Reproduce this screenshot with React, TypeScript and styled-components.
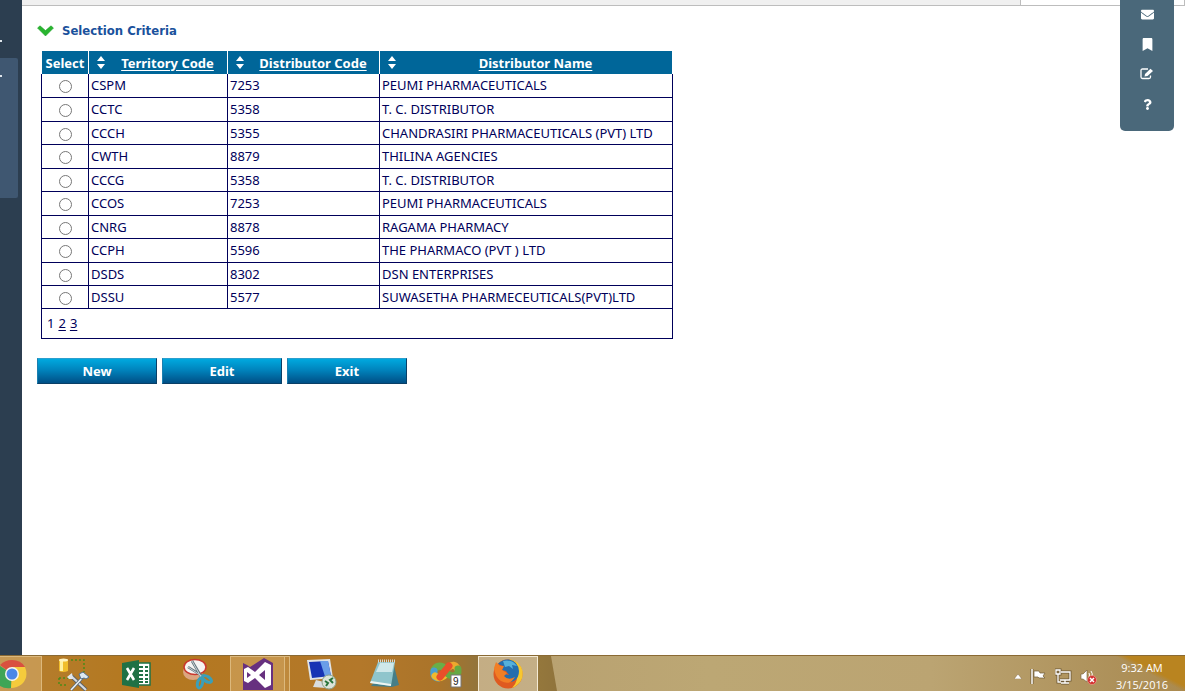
import React, { useState } from "react";
import styled, { createGlobalStyle, css } from "styled-components";
import { FaEnvelope, FaBookmark, FaQuestion } from "react-icons/fa";

const GlobalStyle = createGlobalStyle`
  *, *::before, *::after { box-sizing: border-box; }
  body {
    margin: 0;
    background: #fff;
    color: #00005a;
    font-family: "Trebuchet MS", "Noto Sans", sans-serif;
    font-size: 13px;
  }
`;

const Page = styled.div`
  position: relative;
  display: flex;
  flex-direction: column;
  min-height: 100vh;
`;

const Workspace = styled.div`
  display: flex;
  flex: 1;
`;

const Sidebar = styled.nav`
  display: flex;
  flex-direction: column;
  flex: none;
  width: 22px;
  padding-top: 40px;
  background: #2c3e50;
`;

const SideMark = styled.div`
  width: 2px;
  height: 2px;
  background: #dfe6ec;
`;

const SideGroup = styled.div`
  width: 18px;
  height: 140px;
  margin-top: 16px;
  padding-top: 17px;
  border-radius: 0 2px 2px 0;
  background: #3f5771;
`;

const Content = styled.main`
  flex: 1;
  min-width: 0;
`;

const TopStrip = styled.div`
  display: flex;
  height: 6px;
  border-bottom: 1px solid #bdbdbd;
  background: #f0f0f0;
`;

const StripEnd = styled.div`
  width: 165px;
  margin-left: auto;
  border: solid #bdbdbd;
  border-width: 0 1px;
  background: #fff;
`;

const Form = styled.form`
  padding: 16px 16px 0 15px;
`;

const Heading = styled.h1`
  display: flex;
  align-items: center;
  gap: 8px;
  height: 18px;
  margin: 0 0 11px;
  color: #1a519c;
  font: bold 13px/18px Tahoma, "DejaVu Sans Condensed", "DejaVu Sans", sans-serif;
`;

const Grid = styled.table`
  width: 632px;
  max-width: 100%;
  margin-left: 4px;
  border-collapse: collapse;
  table-layout: fixed;
`;

const Col = styled.col<{ $size: number }>`
  width: ${(p) => p.$size}px;
`;

const Row = styled.tr`
  height: 23px;
  &:nth-child(even):not(:last-child) {
    height: 24px;
  }
`;

const HeadCell = styled.th`
  height: 23px;
  padding: 0;
  border: solid #fff;
  border-width: 0 1px;
  background: #006699;
  color: #fff;
  font-size: 13px;
  line-height: 20px;
  white-space: nowrap;
`;

const HeadInner = styled.div`
  display: flex;
  align-items: center;
  padding: 0 12px 0 6px;
`;

const SortMark = styled.span`
  display: flex;
  flex: none;
  width: 12px;
  justify-content: center;
`;

const HeadLink = styled.a`
  flex: 1;
  padding-left: 13px;
  color: inherit;
  text-align: center;
  text-underline-offset: 2px;
`;

const Cell = styled.td<{ $center?: boolean }>`
  padding: 0 2px;
  border: 1px solid #00005a;
  line-height: 20px;
  white-space: nowrap;
  ${(p) => p.$center && css`text-align: center;`}
`;

const BodyRows = styled.tbody`
  tr:first-child td {
    border-top: 0;
  }
`;

const Radio = styled.input`
  appearance: none;
  display: block;
  width: 13px;
  height: 13px;
  margin: 3px auto 0;
  border: 1px solid #777;
  border-radius: 50%;
  background: #fff;
  &:checked {
    background: radial-gradient(#333 0 3px, #fff 4px);
  }
`;

const PagerCell = styled.td`
  height: 30px;
  padding: 0 5px;
  border: 1px solid #00005a;
`;

const Pager = styled.div`
  display: flex;
  gap: 4px;
`;

const PageLink = styled.a`
  color: inherit;
  text-underline-offset: 2px;
`;

const Actions = styled.div`
  display: flex;
  gap: 5px;
  margin-top: 19px;
`;

const ActionButton = styled.button`
  width: 120px;
  height: 26px;
  padding: 0;
  border: 1px solid #0a3f66;
  border-top-color: #2b9fce;
  border-left-color: #1a7fb0;
  background: linear-gradient(#00a9df, #0084bd 45%, #004f86);
  color: #fff;
  font: bold 13px/20px "Trebuchet MS", "Noto Sans", sans-serif;
`;

const ToolPanel = styled.aside`
  position: absolute;
  top: 0;
  right: 11px;
  display: flex;
  flex-direction: column;
  align-items: center;
  justify-content: flex-end;
  width: 54px;
  height: 131px;
  padding-bottom: 12px;
  border-radius: 0 0 5px 5px;
  background: #4a687a;
`;

const ToolButton = styled.button`
  display: flex;
  align-items: center;
  justify-content: center;
  flex: none;
  width: 30px;
  height: 30px;
  padding: 0;
  border: 0;
  background: none;
  color: #fff;
  font-size: 13px;
  &:last-child svg {
    font-size: 11px;
  }
`;

const Taskbar = styled.footer`
  display: flex;
  flex: none;
  gap: 2px;
  height: 36px;
  border-top: 1px solid #8a6a34;
  background: linear-gradient(90deg, #b47e30 0, #b4781f 140px, #b3782a 360px, #aa742a 440px, #94743a 475px, #94773c 540px, #8f733c 560px);
`;

const Task = styled.button<{ $open?: boolean; $active?: boolean }>`
  display: flex;
  align-items: center;
  justify-content: center;
  flex: none;
  width: 60px;
  padding: 0;
  border: 0;
  background: none;
  ${(p) => p.$open && css`
    border: solid #dcb87c;
    border-width: 1px 1px 0;
    background: rgba(255, 235, 190, 0.25);
  `}
  ${(p) => p.$active && css`
    border: solid #f4ead4;
    border-width: 1px 1px 0;
    background: rgba(255, 245, 225, 0.45);
  `}
`;

const FirstTask = styled(Task)`
  width: 42px;
  justify-content: flex-start;
  border-left: 0;
`;

const TaskStack = styled.div`
  display: flex;
`;

const StudioTask = styled(Task)`
  width: 55px;
`;

const StackEdge = styled.span`
  width: 5px;
  border: solid #dcb87c;
  border-width: 1px 1px 0 0;
  background: rgba(255, 235, 190, 0.15);
`;

const Tray = styled.div`
  display: flex;
  flex: 1;
  align-items: center;
  justify-content: flex-end;
  gap: 8px;
  margin-left: 11px;
  padding: 5px 15px 0 0;
  background:
    linear-gradient(to top right, transparent 50%, #b98420 58%) top right / 70px 36px no-repeat,
    linear-gradient(90deg, #b9a271, #bca774 25%, #bba472 60%, #ad9059 90%, #ab8a4e);
  clip-path: polygon(0 0, 100% 0, 100% 100%, 6px 100%);
  color: #fff;
`;

const Clock = styled.time`
  width: 56px;
  margin-left: 9px;
  font: 11px/17px "Segoe UI", "Open Sans", sans-serif;
  text-align: center;
  white-space: nowrap;
`;

const ChevronIcon = () => (
  <svg width="17" height="12" viewBox="0 0 17 12">
    <path d="M0.500 3 3 .8 8.500 5.500 14 .8 16.500 3 8.500 11Z" fill="#29b52f" stroke="#159a22" strokeWidth=".5" />
  </svg>
);

const SortIcon = () => (
  <svg width="8" height="13" viewBox="0 0 8 13">
    <path d="M4 0 8 5H0ZM4 13 0 8H8Z" fill="#fff" />
  </svg>
);

const EditIcon = () => (
  <svg width="14" height="12" viewBox="0 0 14 12" fill="none" stroke="#fff">
    <path d="M8 1H2.500Q1 1 1 2.500V9Q1 10.500 2.500 10.500H9Q10.500 10.500 10.500 9V7.500" strokeWidth="1.300" />
    <path d="M4.500 8.500 5 6 10.500.7 13 3 7.500 8Z" fill="#fff" stroke="none" />
  </svg>
);

const ChromeIcon = () => (
  <svg width="27" height="30" viewBox="0 0 27 30">
    <path d="M12 15 0 6Q5 1 12 1 21 1 25 8Z" fill="#d9503f" />
    <path d="M12 15 0 7V27Q5 30 11 29Z" fill="#3fa556" />
    <path d="M12 15 12 8H25Q29 18 22 25 17 29 11 29Z" fill="#f5cb3c" />
    <circle cx="12" cy="15" r="7" fill="#f7f5ee" />
    <circle cx="12" cy="15" r="5.500" fill="#4b87e8" />
  </svg>
);

const ToolsIcon = () => (
  <svg width="34" height="34" viewBox="0 0 34 34">
    <path d="M14 3H27V15M2 21V28H10M2 21H12" fill="none" stroke="#4c8a18" strokeWidth="1.500" strokeDasharray="2 2" />
    <path d="M2 3V14Q6 16 11 14V3Z" fill="#f0bd2c" />
    <path d="M3 4V14H6V4Z" fill="#fff0a0" />
    <ellipse cx="6.500" cy="3" rx="4.500" ry="1.500" fill="#fff3c0" />
    <path d="M13 18 29 33" stroke="#5a6168" strokeWidth="4" />
    <path d="M13 18 29 33" stroke="#d5dade" strokeWidth="2.200" />
    <path d="M27 19 14 33" stroke="#5b6c7d" strokeWidth="3" />
    <path d="M27 19 14 33" stroke="#eef3f6" strokeWidth="1.500" />
    <path d="M22 17 26 15 32 20 29 22 27 21 24 22Z" fill="#dde8f0" stroke="#56708a" />
    <path d="M10 20 15 16 16 22 12 22Z" fill="#e2e6e8" />
  </svg>
);

const ExcelIcon = () => (
  <svg width="30" height="30" viewBox="0 0 30 30">
    <path d="M15 4H29V26H15Z" fill="#fff" stroke="#1f7145" strokeWidth="1.500" />
    <path d="M18 8H22M24 8H27M18 12H22M24 12H27M18 16H22M24 16H27M18 20H22M24 20H27M18 23H22M24 23H27" stroke="#1f7145" strokeWidth="2" />
    <path d="M1 4 18 1V29L1 26Z" fill="#1f7145" />
    <path d="M6 9 13 21M13 9 6 21" stroke="#fff" strokeWidth="2.600" />
  </svg>
);

const SnipIcon = () => (
  <svg width="32" height="32" viewBox="0 0 32 32">
    <ellipse cx="11" cy="14" rx="10" ry="8" fill="#dca580" />
    <ellipse cx="13" cy="9" rx="11" ry="7.500" fill="#f6f4f3" stroke="#c9382f" strokeWidth="1.500" />
    <path d="M10 3 20 20M6 9 22 19" stroke="#66747c" strokeWidth="2.500" />
    <path d="M10 3 19 19M6 9 21 19" stroke="#c7d3d8" strokeWidth="1" />
    <ellipse cx="18" cy="25" rx="2.500" ry="5" fill="none" stroke="#3b9fb8" strokeWidth="3" transform="rotate(15 18 25)" />
    <ellipse cx="25" cy="21" rx="2.500" ry="5" fill="none" stroke="#3b9fb8" strokeWidth="3" transform="rotate(-58 25 21)" />
  </svg>
);

const StudioIcon = () => (
  <svg width="30" height="32" viewBox="0 0 30 32">
    <path d="M0 5 4 7 7 9 21 0 30 5V32H0Z" fill="#67307f" />
    <path fillRule="evenodd" d="M1 11 5 9 12 14 22 4 28 7V27L22 30 12 20 5 25 1 23ZM4 14V20L8 17ZM22 12 16 17 22 22Z" fill="#fff" />
  </svg>
);

const RemoteIcon = () => (
  <svg width="32" height="32" viewBox="0 0 32 32">
    <path d="M10 22 18 24 20 30 7 29Z" fill="#d9dddf" />
    <path d="M1 2 24 1 27 20 4 22Z" fill="#dfe3e7" />
    <path d="M3 4 22 3 25 18 6 20Z" fill="#1733b4" />
    <path d="M14 3 22 3 25 18 19 18.500Z" fill="#6a9ee8" />
    <circle cx="23" cy="24" r="7" fill="#dce4d9" stroke="#8aa08a" />
    <path d="M19 23 22 25 20 28M27 20 24 22 27 25" fill="none" stroke="#28743a" strokeWidth="2" />
  </svg>
);

const NotepadIcon = () => (
  <svg width="32" height="32" viewBox="0 0 32 32">
    <path d="M25 4 31 27 24 29 3 28Z" fill="#467e87" />
    <path d="M10 4 27 4 23 28 2 25Z" fill="#8fc5cc" />
    <path d="M12 5 26 5 24 14 8 14Z" fill="#cfe8ea" />
    <path d="M2 25 23 28 23 26 3 23Z" fill="#eef5f1" />
    <path d="M10 3H28" stroke="#d7d9d4" strokeWidth="3" strokeDasharray="1 1" />
  </svg>
);

const LoopIcon = () => (
  <svg width="34" height="32" viewBox="0 0 34 32">
    <g fill="none" strokeWidth="7" strokeLinecap="round">
      <path d="M14 9Q8 6 5 12" stroke="#69ae48" />
      <path d="M5 13Q4 19 9 20" stroke="#4a9fd0" />
      <path d="M6 18Q11 22 17 16" stroke="#f0b92c" />
      <path d="M20 9Q25 5 28 10" stroke="#eea82d" />
      <path d="M29 11Q30 17 24 18 20 18 17 14" stroke="#66a943" />
      <path d="M11 19 20 8" stroke="#e94f2a" />
    </g>
    <path d="M22 17H32V29H22Z" fill="#fff" stroke="#777" />
    <text x="24" y="27" fill="#222" fontFamily="Liberation Sans" fontSize="10">9</text>
  </svg>
);

const FirefoxIcon = () => (
  <svg width="32" height="32" viewBox="0 0 32 32">
    <circle cx="16" cy="16" r="14.500" fill="#df5a20" />
    <path d="M17 1Q28 3 30.500 13 32 25 20 30 27 24 25 9Z" fill="#f7c72e" />
    <path d="M6 6Q10 1 17 1.500 26 3 27 13 27 20 22 23 14 26 10 19L11 16 17 17 14 13 10 12 11 8Z" fill="#256eae" />
    <path d="M11 3Q20 1 25 8L20 7 21 11 17 8 13 9Z" fill="#55b0da" />
    <path d="M2 10 4 4 8 8 12 8 10 12 15 15 12 18Q16 23 23 19 18 28 9 23 3 19 2 10Z" fill="#f17e25" />
  </svg>
);

const UpIcon = () => (
  <svg width="8" height="5" viewBox="0 0 8 5"><path d="M0 5 4 0 8 5Z" fill="#fff" stroke="#846b43" strokeWidth=".5" /></svg>
);

const FlagIcon = () => (
  <svg width="17" height="17" viewBox="0 0 17 17">
    <path d="M2 1V16" stroke="#6f5a36" strokeWidth="3" />
    <path d="M2 1V16" stroke="#fff" strokeWidth="1.500" />
    <path d="M4 3H9L10 5H15L13 8 15 10H9L8 9H4Z" fill="#fff" stroke="#6f5a36" strokeWidth=".7" />
  </svg>
);

const NetworkIcon = () => (
  <svg width="17" height="17" viewBox="0 0 17 17" fill="none">
    <path d="M6 4H15V12H5M10 12V15M6 15H14M3 6V14H6M1 2H5V6H1Z" stroke="#6f5a36" strokeWidth="3" />
    <path d="M6 4H15V12H5M10 12V15M6 15H14M3 6V14H6M1 2H5V6H1Z" stroke="#fff" strokeWidth="1.300" />
  </svg>
);

const SoundIcon = () => (
  <svg width="17" height="17" viewBox="0 0 17 17" fill="none">
    <path d="M1 6H3L7 2V14L3 11H1Z" fill="#fff" stroke="#6f5a36" strokeWidth=".6" />
    <path d="M9 5Q10 7 9 9M11 3Q13 6 12 8" stroke="#fff" />
    <circle cx="12" cy="12" r="4.500" fill="#d32f2f" stroke="#f0b0a0" strokeWidth=".6" />
    <path d="M10 10 14 14M14 10 10 14" stroke="#fff" strokeWidth="1.500" />
  </svg>
);

const rows = [
  ["CSPM", "7253", "PEUMI PHARMACEUTICALS"],
  ["CCTC", "5358", "T. C. DISTRIBUTOR"],
  ["CCCH", "5355", "CHANDRASIRI PHARMACEUTICALS (PVT) LTD"],
  ["CWTH", "8879", "THILINA AGENCIES"],
  ["CCCG", "5358", "T. C. DISTRIBUTOR"],
  ["CCOS", "7253", "PEUMI PHARMACEUTICALS"],
  ["CNRG", "8878", "RAGAMA PHARMACY"],
  ["CCPH", "5596", "THE PHARMACO (PVT ) LTD"],
  ["DSDS", "8302", "DSN ENTERPRISES"],
  ["DSSU", "5577", "SUWASETHA PHARMECEUTICALS(PVT)LTD"],
];

const sortable = ["Territory Code", "Distributor Code", "Distributor Name"];

export default function App() {
  const [selected, setSelected] = useState("");
  return (
    <Page>
      <GlobalStyle />
      <Workspace>
        <Sidebar aria-label="Main">
          <SideMark />
          <SideGroup><SideMark /></SideGroup>
        </Sidebar>
        <Content>
          <TopStrip><StripEnd /></TopStrip>
          <Form onSubmit={(e) => e.preventDefault()}>
            <Heading><ChevronIcon />Selection Criteria</Heading>
            <Grid>
              <colgroup>
                <Col $size={47} /><Col $size={139} /><Col $size={152} /><Col $size={293} />
              </colgroup>
              <thead>
                <tr>
                  <HeadCell>Select</HeadCell>
                  {sortable.map((name) => (
                    <HeadCell key={name}>
                      <HeadInner>
                        <SortMark><SortIcon /></SortMark>
                        <HeadLink href="#sort">{name}</HeadLink>
                      </HeadInner>
                    </HeadCell>
                  ))}
                </tr>
              </thead>
              <BodyRows>
                {rows.map(([code, distributor, name]) => (
                  <Row key={code}>
                    <Cell $center>
                      <Radio
                        type="radio"
                        name="territory"
                        aria-label={code}
                        checked={selected === code}
                        onChange={() => setSelected(code)}
                      />
                    </Cell>
                    <Cell>{code}</Cell>
                    <Cell>{distributor}</Cell>
                    <Cell>{name}</Cell>
                  </Row>
                ))}
              </BodyRows>
              <tfoot>
                <tr>
                  <PagerCell colSpan={4}>
                    <Pager>
                      <span>1</span>
                      <PageLink href="#page2">2</PageLink>
                      <PageLink href="#page3">3</PageLink>
                    </Pager>
                  </PagerCell>
                </tr>
              </tfoot>
            </Grid>
            <Actions>
              <ActionButton type="button">New</ActionButton>
              <ActionButton type="button">Edit</ActionButton>
              <ActionButton type="button">Exit</ActionButton>
            </Actions>
          </Form>
        </Content>
      </Workspace>
      <ToolPanel>
        <ToolButton aria-label="Mail"><FaEnvelope /></ToolButton>
        <ToolButton aria-label="Bookmark"><FaBookmark /></ToolButton>
        <ToolButton aria-label="Edit note"><EditIcon /></ToolButton>
        <ToolButton aria-label="Help"><FaQuestion /></ToolButton>
      </ToolPanel>
      <Taskbar>
        <FirstTask $open aria-label="Chrome"><ChromeIcon /></FirstTask>
        <Task aria-label="Tools"><ToolsIcon /></Task>
        <Task aria-label="Excel"><ExcelIcon /></Task>
        <Task aria-label="Snipping Tool"><SnipIcon /></Task>
        <TaskStack>
          <StudioTask $open aria-label="Visual Studio"><StudioIcon /></StudioTask>
          <StackEdge />
        </TaskStack>
        <Task aria-label="Remote Desktop"><RemoteIcon /></Task>
        <Task aria-label="Notepad"><NotepadIcon /></Task>
        <Task aria-label="Team tool"><LoopIcon /></Task>
        <Task $active aria-label="Firefox"><FirefoxIcon /></Task>
        <Tray>
          <UpIcon />
          <FlagIcon />
          <NetworkIcon />
          <SoundIcon />
          <Clock>9:32 AM<br />3/15/2016</Clock>
        </Tray>
      </Taskbar>
    </Page>
  );
}
